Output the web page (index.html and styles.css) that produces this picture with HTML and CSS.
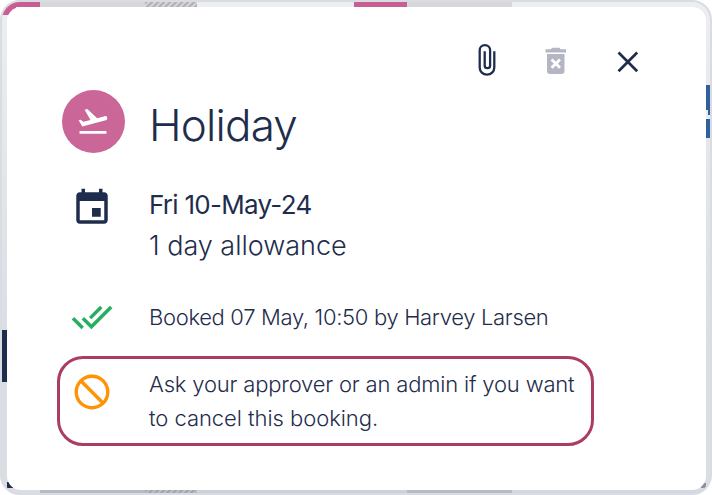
FILE: index.html
```html
<!DOCTYPE html>
<html lang="en">
<head>
    <meta charset="UTF-8">
    <meta name="viewport" content="width=device-width, initial-scale=1.0">
    <title>Holiday</title>
    <link rel="stylesheet" href="styles.css">
</head>
<body>
    <div class="frame">
        <div class="strip strip-top">
            <span class="day pink"></span>
            <span class="day weekend"></span>
            <span class="day hatch"></span>
            <span class="day wide"></span>
            <span class="day pink short"></span>
            <span class="day weekend"></span>
        </div>

        <div class="middle">
            <div class="edge edge-left"><span class="mark navy"></span></div>

            <div class="modal">
                <div class="toolbar">
                    <svg class="icon-clip" width="20" height="34" viewBox="0 0 20 34" fill="none" stroke="#1f2d4d" stroke-width="2.3">
                        <path d="M17.3 8.2V24.4a7.3 7.3 0 0 1-14.6 0V7.3a5.2 5.2 0 0 1 10.4 0V22.5a2.7 2.7 0 0 1-5.4 0V8.2"/>
                    </svg>
                    <svg class="icon-bin" width="22" height="28" viewBox="0 0 22 28">
                        <path fill="#b5b6c3" d="M.5 2.2H5.8L7.2.7H14.2L15.6 2.2H21V5.5H.5ZM2 7.1H19.5V24a3 3 0 0 1-3 3H5a3 3 0 0 1-3-3Z"/>
                        <path stroke="#fff" stroke-width="2.8" d="M6.6 12.4 15 20.8M15 12.4 6.6 20.8"/>
                    </svg>
                    <svg class="icon-close" width="22" height="22" viewBox="0 0 22 22">
                        <path stroke="#1f2d4d" stroke-width="2.7" d="M1.5 1.5 20.2 20.2M20.2 1.5 1.5 20.2"/>
                    </svg>
                </div>

                <div class="row title-row">
                    <div class="icon">
                        <div class="avatar">
                            <svg width="34" height="34" viewBox="0 0 24 24" fill="#fff">
                                <path d="M2.5 19h19v2h-19zm19.57-9.36c-.21-.8-1.04-1.28-1.84-1.06L14.92 10l-6.9-6.43-1.93.51 4.14 7.17-4.97 1.33-1.97-1.54-1.45.39 2.59 4.49L21 11.49c.81-.23 1.28-1.05 1.07-1.85z"/>
                            </svg>
                        </div>
                    </div>
                    <h1>Holiday</h1>
                </div>

                <div class="row date-row">
                    <div class="icon">
                        <svg width="42" height="42" viewBox="0 0 24 24" fill="#1f2d4d">
                            <path d="M17 12h-5v5h5v-5zM16 1v2H8V1H6v2H5c-1.11 0-1.99.9-1.99 2L3 19c0 1.1.89 2 2 2h14c1.1 0 2-.9 2-2V5c0-1.1-.9-2-2-2h-1V1h-2zm3 18H5V8h14v11z"/>
                        </svg>
                    </div>
                    <div class="text">
                        <p class="date">Fri 10-May-24</p>
                        <p class="allowance">1 day allowance</p>
                    </div>
                </div>

                <div class="row booked-row">
                    <div class="icon">
                        <svg width="42" height="42" viewBox="0 0 24 24" fill="#27ae60">
                            <path d="M18 7l-1.41-1.41-6.34 6.34 1.41 1.41L18 7zm4.24-1.41L11.66 16.17 7.48 12l-1.41 1.41L11.66 19l12-12-1.42-1.41zM.41 13.41L6 19l1.41-1.41L1.83 12 .41 13.41z"/>
                        </svg>
                    </div>
                    <p class="booked">Booked 07 May, 10:50 by Harvey Larsen</p>
                </div>

                <div class="row notice">
                    <div class="icon">
                        <svg width="36" height="36" viewBox="0 0 36 36" fill="none" stroke="#ff9205" stroke-width="3.4">
                            <circle cx="18" cy="18" r="15.8"/>
                            <path d="M6.8 6.8 29.2 29.2"/>
                        </svg>
                    </div>
                    <p class="message">Ask your approver or an admin if you want<br><span class="message-end">to cancel this booking.</span></p>
                </div>
            </div>

            <div class="edge edge-right"><span class="mark blue"></span></div>
        </div>

        <div class="strip strip-bottom">
            <span class="day pale"></span>
            <span class="day weekend"></span>
            <span class="day hatch"></span>
            <span class="day tall"></span>
            <span class="day weekend"></span>
        </div>
    </div>
</body>
</html>
```

FILE: styles.css
```css
* {
    box-sizing: border-box;
}

body {
    margin: 0;
    font-family: Inter, "Liberation Sans", sans-serif;
    color: #1f2d4d;
    background-color: #fff;
}

h1,
p {
    margin: 0;
    white-space: nowrap;
}

svg {
    display: block;
}

.frame {
    display: flex;
    flex-direction: column;
    width: 712px;
    height: 495px;
    border: 2px solid #d9dce3;
    border-radius: 20px;
    overflow: hidden;
    background: linear-gradient(#eceef0, #dadde2 70%);
}

.strip {
    display: flex;
    flex: none;
    height: 5px;
}

.strip-bottom {
    height: 3px;
    background-color: #d5d9df;
}

.day {
    width: 105px;
}

.pink {
    width: 38px;
    background-color: #c75f95;
}

.pink.short {
    width: 53px;
}

.weekend {
    background-color: #d7d7d8;
}

.strip-bottom .weekend {
    background-color: #babac3;
}

.hatch {
    width: 52px;
    background: repeating-linear-gradient(135deg, #b4b4b5 0 1.6px, #d5d5d5 2.4px 3.6px, #b4b4b5 4.24px);
}

.strip-bottom .hatch {
    background: repeating-linear-gradient(135deg, #a5a5ac 0 1.6px, #bfbfc6 2.4px 3.6px, #a5a5ac 4.24px);
}

.wide {
    width: 157px;
}

.tall {
    width: 210px;
    background-color: #cdd2d9;
}

.pale {
    width: 38px;
    background-color: #dcdee4;
}

.middle {
    display: flex;
    flex: 1;
    min-height: 0;
    background: linear-gradient(90deg, #c75f95 0 14px, transparent 14px) 0 0 / 100% 8px no-repeat,
        linear-gradient(#1f2d4d, #1f2d4d) 5px calc(100% - 2px) / 6px 6px no-repeat,
        linear-gradient(#8b90a6, #8b90a6) 699px calc(100% - 2px) / 5px 5px no-repeat;
}

.edge {
    display: flex;
    flex-direction: column;
    flex: none;
    width: 5px;
}

.edge-left {
    padding-top: 323px;
}

.edge-right {
    width: 4px;
    padding-top: 78px;
}

.mark {
    height: 52px;
}

.navy {
    background-color: #1f2d4d;
}

.blue {
    height: 53px;
    background: linear-gradient(#e8ecf2, #e8ecf2) 0 25px / 2px 9px no-repeat,
        linear-gradient(#e8ecf2, #e8ecf2) 0 30px / 4px 4px no-repeat,
        #2f609c;
}

.modal {
    flex: 1;
    border-radius: 14px;
    background-color: #fff;
}

.toolbar {
    display: flex;
    align-items: center;
    justify-content: flex-end;
    height: 34px;
    margin: 37px 67px 0 0;
}

.icon-clip {
    margin-bottom: 2px;
}

.icon-bin {
    margin-left: 48px;
}

.icon-close {
    margin: 2px 0 0 50px;
}

.row {
    display: flex;
}

.icon {
    display: flex;
    flex: none;
    justify-content: center;
    width: 70px;
    margin-left: 50px;
}

.title-row {
    align-items: center;
    height: 64px;
    margin-top: 11px;
}

.title-row .icon {
    margin-right: 21px;
    margin-left: 51px;
}

.avatar {
    display: flex;
    align-items: center;
    justify-content: center;
    width: 63px;
    height: 63px;
    border-radius: 50%;
    background-color: #ca6798;
}

h1 {
    padding-top: 7px;
    font-size: 44px;
    font-weight: 300;
    line-height: 54px;
    letter-spacing: -0.8px;
}

.date-row {
    margin-top: 34px;
}

.date-row .icon,
.booked-row .icon {
    margin-right: 22px;
}

.date {
    font-size: 26px;
    font-weight: 400;
    line-height: 36px;
    letter-spacing: -0.73px;
}

.allowance {
    margin-top: 5px;
    font-size: 27px;
    font-weight: 300;
    line-height: 36px;
    letter-spacing: -0.02px;
}

.booked-row {
    align-items: center;
    height: 42px;
    margin-top: 32px;
}

.booked,
.message {
    font-size: 22px;
    font-weight: 300;
    line-height: 34px;
    letter-spacing: -0.33px;
}

.message {
    letter-spacing: -0.18px;
}

.message-end {
    letter-spacing: -0.05px;
}

.notice {
    width: 537px;
    height: 90px;
    margin: 18px 0 0 50px;
    padding-top: 8px;
    border: 3px solid #ab3d65;
    border-radius: 26px;
}

.notice .icon {
    width: 63px;
    margin: 7px 26px 0 0;
}
```
